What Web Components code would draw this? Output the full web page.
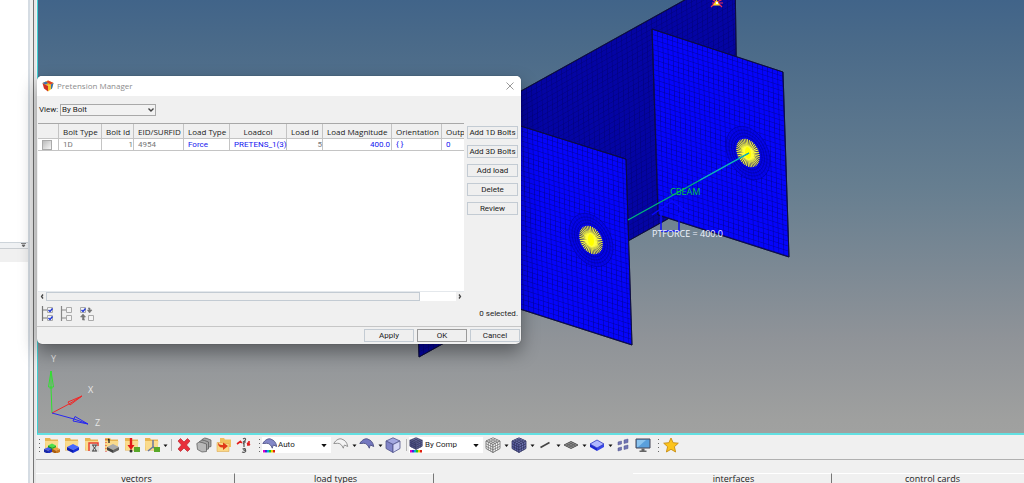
<!DOCTYPE html>
<html lang="en">
<head>
<meta charset="utf-8">
<title>Pretension Manager</title>
<style>
  html, body { margin: 0; height: 100%; overflow: hidden; background: #f0f0f0; }
  body { font: 8px/12px Roboto, "Open Sans", sans-serif; color: #222; }
</style>
</head>
<body>
<app-shell>
  <side-panel slot="side"></side-panel>
  <model-view slot="view"><pretension-dialog></pretension-dialog></model-view>
  <tool-bar slot="tools"></tool-bar>
  <panel-tabs slot="tabs"></panel-tabs>
</app-shell>

<script>
const define = (name, html, setup) => customElements.define(name, class extends HTMLElement {
  constructor() {
    super();
    const root = this.attachShadow({ mode: 'open' });
    root.innerHTML = typeof html === 'function' ? html(this) : html;
    if (setup) setup(root, this);
  }
});

/* ---------- shell ---------- */
define('app-shell', `
<style>
  :host { display: grid; grid-template-columns: 36px 1fr; height: calc(100vh + 7px); }
  main { display: flex; flex-direction: column; min-width: 0; min-height: 0; }
  .view { flex: 1; min-height: 0; display: grid; }
</style>
<slot name="side"></slot>
<main><div class="view"><slot name="view"></slot></div><slot name="tools"></slot><slot name="tabs"></slot></main>`);

define('side-panel', `
<style>
  :host { display: grid; grid-template-columns: 1fr 2px 3px 1px 2px; }
  .col { display: flex; flex-direction: column; background: #fff; }
  .top { flex: 18; } .bottom { flex: 17; }
  .split { height: 5px; background: #eff1f3; border-top: 1px solid #cdd4da; display: flex; justify-content: flex-end; }
  .head { height: 13px; background: #f0f0f0; border-top: 1px solid #c9cdd1; }
  .edge { background: #d5dce3; } .gap { background: #efefef; } .dark { background: #747474; } .end { background: #e6e6e6; }
  svg { margin-right: 2px; }
</style>
<div class="col"><div class="top"></div>
<div class="split"><svg width="5" height="5" viewBox="0 0 5 5"><path d="M0 .5h5M1 2l1.500 2 1.500-2z" fill="#666" stroke="#666" stroke-width=".8"/></svg></div>
<div class="head"></div><div class="bottom"></div></div>
<div class="edge"></div><div class="gap"></div><div class="dark"></div><div class="end"></div>`);

/* ---------- 3D model view ---------- */
const spider = (x, y) => {
  let s = '', n = 40, ring = '', rad = '';
  for (let i = 0; i < n; i++) {
    const a = i * 2 * Math.PI / n, c = Math.cos(a), d = Math.sin(a);
    s += `M0 0L${(c * 11.8).toFixed(2)} ${(d * 11.8).toFixed(2)}`;
    rad += `M${(c * 12).toFixed(2)} ${(d * 12).toFixed(2)}L${(c * 22).toFixed(2)} ${(d * 22).toFixed(2)}`;
  }
  for (const r of [14, 16.5, 19, 22]) ring += `<circle r="${r}"/>`;
  return `<g transform="matrix(1 .32 .035 1.17 ${x} ${y})">
    <circle r="22" fill="#0404e8"/><g fill="none" stroke="#000050" stroke-opacity=".5" stroke-width=".5">${ring}<path d="${rad}" stroke-width=".25"/></g>
    <circle r="11.500" fill="#30307c"/><path d="${s}" stroke="#ffff3c" stroke-width=".85"/><ellipse rx="3" ry="5" fill="#ff0"/></g>`;
};

define('model-view', `
<style>
  :host { display: grid; position: relative; z-index: 1; border-left: 1px solid #3fd0d4; border-bottom: 2px solid #62e0e2; margin-left: 1px; min-height: 0;
    background: linear-gradient(#416489, #4a6a89 10%, #667e90 43%, #7c8994 62%, #8f9398 78%, #9fa09f 97%, #a0a1a0); }
  svg { width: 100%; height: 100%; min-height: 0; display: block; overflow: hidden; grid-area: 1 / 1; }
  text { font: 9px "Open Sans", "Noto Sans", sans-serif; }
  .over { position: absolute; left: -1px; top: 76px; }
</style>
<svg viewBox="38 0 986 433" preserveAspectRatio="xMinYMin slice">
  <defs>
    <pattern id="m" width="5" height="5" patternUnits="userSpaceOnUse" patternTransform="matrix(1 .32 .035 1 652 29)"><path d="M0 0H5M0 0V5" stroke="#00003c" stroke-opacity=".6" stroke-width=".9"/></pattern>
    <pattern id="w" width="5" height="5" patternUnits="userSpaceOnUse" patternTransform="matrix(1 -.555 .035 1 521 91)"><path d="M0 0H5M0 0V5" stroke="#000028" stroke-opacity=".4" stroke-width=".9"/></pattern>
  </defs>
  <g stroke="#0c0c3c" stroke-width=".8">
    <path d="M412 152L521 91 735-28 738 180 419 357z" fill="#0404a4"/>
    <path d="M412 152L521 91 735-28 738 180 419 357z" fill="url(#w)"/>
    <path d="M652 29L783 72 789 257 658 215z" fill="#0505fa"/>
    <path d="M652 29L783 72 789 257 658 215z" fill="url(#m)"/>
    <path d="M495 118L626 159 632 345 501 303z" fill="#0505fa"/>
    <path d="M495 118L626 159 632 345 501 303z" fill="url(#m)"/>
  </g>
  ${spider(748, 153)}${spider(591, 240)}
  <path d="M661 231V211M679 231V213M652 215L672 201 689 213M661 231h18" fill="none" stroke="#0a0aff" stroke-width="1.500"/>
  <path d="M628 220L749 153" stroke="#00b47c" stroke-width="1.400"/>
  <path d="M700 180L749 153" stroke="#10a8c8" stroke-width="1.200"/>
  <path d="M711 7l4-4M716 2l-4-3M717 2l6-3M712 3h11M719 4l3 3" stroke="#f0305a" stroke-width="1.200"/>
  <path d="M713 5.500l3.500-6 3.500 6z" fill="#fd2"/><path d="M716 2h2v2h-2z" fill="#fff"/>
  <text x="670" y="195" fill="#00c83c">CBEAM</text>
  <text x="652" y="237" fill="#f0f4ff">PTFORCE = 400.0</text>
  <g fill="none">
    <path d="M52 413L51 388M48.500 387L51 371 53.500 387zM51 371V388M49.500 388h3" stroke="#30e030"/>
    <path d="M52 413L69 404M68 402L82 396 70 405zM69 404L82 396" stroke="#f02828"/>
    <path d="M52 413L74 419M75 416.500L88 424 73 421zM74 419L88 424" stroke="#2828f0"/>
  </g>
  <g fill="#e8e8e8"><text x="51" y="362">Y</text><text x="88" y="393">X</text><text x="95" y="426">Z</text></g>
</svg>
<div class="over"><slot></slot></div>`);

/* ---------- dialog ---------- */
define('push-button', el => `
<style>
  :host { display: block; }
  button { all: unset; box-sizing: border-box; display: block; width: 100%; height: 13px; font: inherit; line-height: 11px; text-align: center; color: #222; background: #efefef; border: 1px solid #c3cbd3; cursor: default; }
  :host([primary]) button { border-color: #9a9a9a; }
</style>
<button type="button"><slot></slot></button>`);

const box = (x, y, on) => `<path d="M${x} ${y}h5v5h-5z" fill="#f4f4f4" stroke="#aaa"/>` + (on ? `<path d="M${x + 1} ${y + 2.5}l1.500 1.500 2.500-3" stroke="#2038d8" stroke-width="1.400" fill="none"/>` : '');

define('bolt-table', `
<style>
  :host { display: flex; flex-direction: column; background: #fff; height: 177px; overflow: hidden; border-top: 1px solid #a8a8a8; }
  .rows { flex: 1; overflow: hidden; }
  table { table-layout: fixed; border-collapse: separate; border-spacing: 0; width: 465px; }
  th, td { box-sizing: border-box; padding: 0 0 0 4px; text-align: left; white-space: nowrap; font-weight: normal; border-right: 1px solid #c4c4c4; border-bottom: 1px solid #c4c4c4; }
  th { height: 15px; line-height: 12px; padding-top: 2px; background: #f0f0f0; color: #222; font-family: "Open Sans", sans-serif; }
  td { height: 12px; line-height: 10px; padding-top: 1px; color: #777; }
  td.e { color: #1414f0; } td.r { text-align: right; }
  .c { text-align: center; padding-left: 0; }
  td.e.r { padding-right: 1px; }
  input { appearance: none; display: block; box-sizing: border-box; width: 10px; height: 10px; margin: 0 0 0 4px; border: 1px solid #aaa; background: linear-gradient(135deg, #bbb, #f6f6f6); }
  td:first-child { padding: 0; }
  .bar { display: flex; height: 9px; background: #fff; align-items: stretch; border-top: 1px solid #e4e8ec; }
  .bar svg { width: 8px; height: 9px; background: #f0f0f0; }
  .thumb { flex: 375; box-sizing: border-box; background: #f0f0f0; border: 1px solid #c3cbd3; } .rest { flex: 36; }
</style>
<div class="rows"><table>
<colgroup><col style="width:21px"><col style="width:43px"><col style="width:32px"><col style="width:50px"><col style="width:46px"><col style="width:57px"><col style="width:36px"><col style="width:69px"><col style="width:50px"><col style="width:61px"></colgroup>
<thead><tr><th></th><th>Bolt Type</th><th>Bolt Id</th><th>EID/SURFID</th><th>Load Type</th><th class="c">Loadcol</th><th>Load Id</th><th>Load Magnitude</th><th>Orientation</th><th>Outp</th></tr></thead>
<tbody><tr><td><input type="checkbox" aria-label="Select bolt 1"></td><td>1D</td><td class="r">1</td><td>4954</td><td class="e">Force</td><td class="e">PRETENS_1(3)</td><td class="r">5</td><td class="e r">400.0</td><td class="e">{ }</td><td class="e">0</td></tr></tbody>
</table></div>
<div class="bar"><svg viewBox="0 0 8 9"><path d="M5 2.500L3.500 4.500 5 6.500" fill="none" stroke="#444" stroke-width="1.300"/></svg><div class="thumb"></div><div class="rest"></div><svg viewBox="0 0 8 9"><path d="M3 2.500L4.500 4.500 3 6.500" fill="none" stroke="#444" stroke-width="1.300"/></svg></div>`);

define('pretension-dialog', `
<style>
  :host { display: flex; flex-direction: column; width: 484px; background: #f0f0f0; border-radius: 5px; overflow: hidden; box-shadow: 0 8px 18px rgba(0,0,0,.38), 0 0 1px rgba(0,0,0,.5); }
  header { display: flex; align-items: center; height: 20px; background: #fff; padding: 0 5px; gap: 3px; }
  h1 { flex: 1; margin: 0; font: 8px/12px "Open Sans", sans-serif; color: #8c8c8c; }
  .close { all: unset; width: 12px; height: 12px; display: grid; place-items: center; }
  .view { display: flex; align-items: center; height: 27px; padding-left: 2px; gap: 4px; }
  .view label { width: 17px; white-space: nowrap; }
  .combo { display: grid; width: 96px; align-items: center; }
  select { grid-area: 1/1; appearance: none; box-sizing: border-box; height: 12px; padding: 0 1px; margin: 0; border: 1px solid #a9a9a9; border-radius: 0; background: #f2f2f2; font: inherit; line-height: 10px; color: #222; }
  .combo svg { grid-area: 1/1; justify-self: end; margin-right: 2px; pointer-events: none; }
  .mid { display: grid; grid-template-columns: 1fr 51px; gap: 3px; padding: 0 3px 0 1px; }
  .side { display: flex; flex-direction: column; gap: 6px; padding-top: 3px; }
  .status { display: flex; align-items: center; height: 25px; padding: 0 3px 0 4px; gap: 4px; border-bottom: 1px solid #c6c6c6; }
  .status button { all: unset; width: 15px; height: 16px; }
  .status span { margin-left: auto; }
  .status svg { display: block; }
  footer { display: flex; justify-content: flex-end; align-items: center; gap: 3px; height: 17px; padding-right: 1px; }
  footer push-button { width: 50px; }
</style>
<header>
  <svg width="12" height="12" viewBox="0 0 12 12"><path d="M.5 3L6 .5 11.500 3 6 6z" fill="#f2b820"/><path d="M.5 3L6 6v5.500L2 8.500z" fill="#d03020"/><path d="M11.500 3L6 6v5.500l4-3z" fill="#f5c52c"/><path d="M.5 3L4 1.400 6.500 3 3.500 4.500z" fill="#3a70b0"/><path d="M6 .5l5.500 2.500-3 1.500L4.500 2z" fill="#e04028"/><path d="M11.500 3L9 4.400v4.800l1-.7z" fill="#2f6fb8"/></svg>
  <h1>Pretension Manager</h1>
  <button class="close" aria-label="Close"><svg width="8" height="8" viewBox="0 0 8 8"><path d="M.5.5l7 7M7.500.5l-7 7" stroke="#999"/></svg></button>
</header>
<div class="view"><label for="v">View:</label>
  <div class="combo"><select id="v"><option>By Bolt</option></select><svg width="6" height="6" viewBox="0 0 6 6"><path d="M.5 1.500L3 4l2.500-2.500" fill="none" stroke="#444" stroke-width="1.400"/></svg></div></div>
<div class="mid"><bolt-table></bolt-table>
  <div class="side"><push-button>Add 1D Bolts</push-button><push-button>Add 3D Bolts</push-button><push-button>Add load</push-button><push-button>Delete</push-button><push-button>Review</push-button></div></div>
<div class="status">
  <button aria-label="Select all"><svg width="14" height="16" viewBox="0 0 14 16"><path d="M1.500 0v15M1.500 4H6M1.500 12H6" stroke="#777" stroke-width="1.200"/>${box(6.5, 1.5, 1)}${box(6.5, 9.500, 1)}</svg></button>
  <button aria-label="Select none"><svg width="14" height="16" viewBox="0 0 14 16"><path d="M1.500 0v15M1.500 4H6M1.500 12H6" stroke="#888" stroke-width="1.200"/>${box(6.5, 1.5)}${box(6.5, 9.500)}</svg></button>
  <button aria-label="Reverse selection"><svg width="15" height="16" viewBox="0 0 15 16">${box(1.5, 1.5, 1)}${box(9.5, 9.500)}<path d="M9 2h2v2h2l-2.500 3L8.500 4H10M5 13V11h1.500L4 8 1.500 11H3.500V14H6" fill="#777" stroke="#777" stroke-width=".6"/></svg></button>
  <span>0 selected.</span></div>
<footer><push-button>Apply</push-button><push-button primary>OK</push-button><push-button>Cancel</push-button></footer>`);

/* ---------- toolbar ---------- */
const folder = '<path d="M1 1h5l1 1.500h7v11H1z" fill="#e8b450"/><path d="M1 4h13.500L13.500 13H1.500z" fill="#fadb8c"/>';
const slab = (x, y, w, h, t, l, r) => `<path d="M${x} ${y}l${w}-${h} ${w} ${h}-${w} ${h}z" fill="${t}"/><path d="M${x} ${y}l${w} ${h}v3l-${w}-${h}z" fill="${l}"/><path d="M${x + 2 * w} ${y}l-${w} ${h}v3l${w}-${h}z" fill="${r}"/>`;
const cube = (t, l, r, s) => `<g stroke="${s}" stroke-width=".8"><path d="M1 4L8 .8l7 3.200L8 7.500z" fill="${t}"/><path d="M1 4L8 7.500v8l-7-4z" fill="${l}"/><path d="M15 4L8 7.500v8l7-4z" fill="${r}"/></g>`;
const lines = s => `<path d="M3.300 3l7 3.300v8M5.700 1.900l7 3.300v8M12.700 3l-7 3.300v8M10.300 1.900l-7 3.300v8M1 6.700l7 3.500 7-3.500M1 9.300l7 3.500 7-3.500" fill="none" stroke="${s}" stroke-width=".8"/>`;
const rainbow = '<path d="M1 13h2v2.500H1z" fill="#e000c0"/><path d="M3 13h2v2.500H3z" fill="#4020e0"/><path d="M5 13h2v2.500H5z" fill="#00b0d0"/><path d="M7 13h2v2.500H7z" fill="#20c020"/><path d="M9 13h2v2.500H9z" fill="#f0d000"/><path d="M11 13h2v2.500h-2z" fill="#e02010"/>';
const surf = (f, s) => `<path d="M.8 6.500C3 2.500 7 1 9 2.200c3 1 5 3 5.700 7.300l-3.200-1.500c-.6 1-1 2-1.200 3.200C9 8 7 6 4.500 6.300z" fill="${f}" stroke="${s}" stroke-width=".9"/>`;
const icons = {
  comps: folder + slab(4, 8.5, 4, 2, '#4ce04c', '#18981c', '#22b028') + slab(0, 12, 4, 1.8, '#4a5cf0', '#1828a8', '#2030c0') + slab(8, 12, 4, 1.8, '#f0a040', '#a85c10', '#c87820'),
  comp: folder + slab(3, 10, 6, 3, '#4868ff', '#0c1cb0', '#1830d8'),
  prop: folder + '<path d="M5 6h10v9H6z" fill="#ddd"/><path d="M5 14V6h9v3" fill="none" stroke="#e84030" stroke-width="1.500"/><path d="M8 8h5M8 14h5M9 8c0 3 3 3 3 6M12 8c0 3-3 3-3 6" stroke="#444" fill="none"/>',
  mat: folder + slab(3, 10, 6, 3, '#aaa', '#444', '#666') + '<path d="M2 2v13" stroke="#e03030" stroke-dasharray="1 2"/><path d="M5 2v4M4 3l1-1" stroke="#222" stroke-width="1.300"/>',
  load: folder + '<path d="M7 1v8" stroke="#e01818" stroke-width="2.400"/><path d="M3.500 8h7L7 13z" fill="#e01818"/><circle cx="7" cy="14" r="1.500" fill="#333"/><path d="M10 10h6v5h-6z" fill="#58a828"/>',
  sys: folder + '<path d="M9 3v7M9 10l-5 4M9 10l5 3" stroke="#6878a0" stroke-width="1.500"/><path d="M10 10h6v5h-6z" fill="#58a828"/>',
  del: '<path d="M2 4l2.500-2.500L8 5l3.500-3.500L14 4l-3.500 4 3.500 4-2.500 2.500L8 11l-3.500 3.500L2 12l3.500-4z" fill="#e8303c" stroke="#b01820" stroke-width=".6"/>',
  org: '<g fill="#a4a4a4" stroke="#555" stroke-width=".7"><path d="M6 2.500Q9 0 11 1.500l4 1.500v6.500L10 11l-4-2z"/><path d="M3.500 4.500Q6 2 8.500 3.500l4 1.500v7L8 13l-4.500-2z"/><path d="M.8 6.500Q3 4 6 5.500L10.500 7v7.500L6 15 1.500 12.500z" fill="#b8b8b8"/></g>',
  move: '<path d="M4 1h4l1 1.500h6V10H4z" fill="#f0c05c"/><path d="M1 5.500h5l1 1h6v8H1z" fill="#fbd886" stroke="#d8a040" stroke-width=".5"/><path d="M2 5.500q1 3 5 2.500V5.500L12 9l-5 4v-2.500Q2 11 2 5.500z" fill="#e03818"/>',
  num: '<g fill="none" stroke-width="1.200"><path d="M7 2q2-1.500 2.500 0T7 5h3M7 7l1-1v4M6.500 12q3-1 3 .5T7.500 13q3 0 2 1.500T6 15" stroke="#555"/><path d="M1 7l4-3M4 4l2 2M11 6l3 2M13 4v4h-2" stroke="#e02020" stroke-width="1.600"/></g>',
  auto: surf('#8488c8', '#505488') + rainbow,
  wire: surf('#f4f4f4', '#888'),
  shade: surf('#7478c0', '#484c80'),
  cube: cube('#a4a8e0', '#8084c8', '#d4d6f6', '#50548c'),
  bycomp: '<g transform="scale(.88 .8)">' + cube('#7c80b8', '#565a94', '#686ca4', '#33365c') + lines('#33365c') + '</g>' + rainbow,
  cubew: cube('#fff', '#f8f8f8', '#fff', '#666') + lines('#777'),
  cubes: cube('#888cc8', '#6064a8', '#7478b8', '#303460') + lines('#303460'),
  line: '<path d="M3.500 10.500l9-5" stroke="#444" stroke-width="1.700"/>',
  grid: '<path d="M1 8l7-3.500L15 8l-7 3.500z" fill="#999" stroke="#555"/><path d="M3.500 6.800l7 3.500M5.800 5.600l7 3.500M12.500 6.800l-7 3.500M10.200 5.600l-7 3.500" stroke="#555" stroke-width=".7"/>',
  slab: slab(1, 7, 7, 4, '#b0b8ff', '#1c28d0', '#3848e8') + '<path d="M1 7l7-4 7 4-7 4z" fill="none" stroke="#3038c0" stroke-width=".8"/>',
  shrink: '<g fill="#7074b4" stroke="#50548c" stroke-width=".5"><path d="M3 5l3.500-1v3L3 8zM9 3l4-1v3.500L9 6.500zM3 11l3.500-1v3L3 14zM9 9l4-1v3.500l-4 1z"/></g>',
  screen: '<path d="M1 2h14v9H1z" fill="#5aa0dc" stroke="#445" /><path d="M2 3h9L3 10H2z" fill="#8cc4ee"/><path d="M6.500 11.500h3v2h-3zM4.500 13.500h7v1.500h-7z" fill="#666"/>',
  star: '<path d="M8 1l2.100 4.700 5.200.5-3.900 3.500 1.200 5.300L8 12.300 3.400 15l1.200-5.300L.7 6.200l5.200-.5z" fill="#fcc41c" stroke="#c88c10" stroke-width=".9"/>'
};
const icon = n => `<svg width="16" height="16" viewBox="0 0 16 16">${icons[n]}</svg>`;

define('tool-button', el => `
<style>
  :host { display: block; }
  button { all: unset; display: flex; align-items: center; width: 20px; height: 20px; padding-left: 2px; box-sizing: border-box; }
  :host([drop]) button { width: 26px; gap: 3px; }
  svg { flex: none; }
</style>
<button type="button" aria-label="${el.getAttribute('icon')}">${icon(el.getAttribute('icon'))}${el.hasAttribute('drop') ? '<svg width="5" height="5" viewBox="0 0 5 5"><path d="M.5 1.500h4L2.500 4z" fill="#111"/></svg>' : ''}</button>`);

define('tool-combo', el => `
<style>
  :host { display: grid; grid-template-columns: 16px 1fr; align-items: center; background: #fff; height: 16px; }
  .i { grid-area: 1/1; display: grid; }
  select { grid-area: 1/2; appearance: none; border: 0; margin: 0; padding: 0; background: none; font: inherit; color: #222; height: 14px; }
  .a { grid-area: 1/2; justify-self: end; margin-right: 4px; pointer-events: none; }
</style>
<span class="i">${icon(el.getAttribute('icon'))}</span><select aria-label="Colour mode"><option>${el.getAttribute('text')}</option></select>
<svg class="a" width="6" height="5" viewBox="0 0 6 5"><path d="M.3 1h5.400L3 4.300z" fill="#111"/></svg>`);

define('tool-bar', `
<style>
  :host { display: flex; align-items: center; height: 20px; padding-bottom: 4px; background: #f0f0f0; border-bottom: 1px solid #b0b0b0; overflow: hidden; }
  .grip, .sep, tool-button, tool-combo { flex: none; }
  .grip { width: 6px; height: 13px; display: grid; place-items: center; }
  .grip + * ~ .grip { margin-left: 2px; }
  .grip::before { content: ""; width: 1px; height: 13px; background: repeating-linear-gradient(#666 0 1px, transparent 1px 4px); }
  .sep { width: 6px; height: 12px; display: grid; justify-items: center; }
  .sep::before { content: ""; width: 1px; height: 12px; background: #b4b4b4; }
  .c1 { width: 69px; } .c2 { width: 74px; }
</style>
<span class="grip"></span>
<tool-button icon="comps"></tool-button><tool-button icon="comp"></tool-button><tool-button icon="prop"></tool-button><tool-button icon="mat"></tool-button><tool-button icon="load"></tool-button><tool-button icon="sys" drop></tool-button>
<span class="sep"></span>
<tool-button icon="del"></tool-button><tool-button icon="org"></tool-button><tool-button icon="move"></tool-button><tool-button icon="num"></tool-button>
<span class="grip"></span>
<tool-combo class="c1" icon="auto" text="Auto"></tool-combo>
<tool-button icon="wire" drop></tool-button><tool-button icon="shade" drop></tool-button><tool-button icon="cube"></tool-button>
<span class="sep"></span>
<tool-combo class="c2" icon="bycomp" text="By Comp"></tool-combo>
<tool-button icon="cubew" drop></tool-button><tool-button icon="cubes" drop></tool-button><tool-button icon="line" drop></tool-button><tool-button icon="grid" drop></tool-button><tool-button icon="slab" drop></tool-button><tool-button icon="shrink"></tool-button><tool-button icon="screen"></tool-button>
<span class="grip"></span>
<tool-button icon="star"></tool-button>`);

/* ---------- bottom tabs ---------- */
define('panel-tabs', `
<style>
  :host { display: block; background: #f0f0f0; padding-top: 13px; height: 17px; overflow: hidden; }
  nav { display: grid; grid-template-columns: repeat(5, 1fr); margin-right: -7px; height: 17px; }
  button { all: unset; box-sizing: border-box; text-align: center; font: 9px/10px "Open Sans", "Noto Sans", sans-serif; color: #222; padding: 0 0 6px 3px; border-top: 1px solid #fff; border-right: 1px solid #777; }
</style>
<nav><button>vectors</button><button>load types</button><span></span><button>interfaces</button><button>control cards</button></nav>`);
</script>
</body>
</html>
